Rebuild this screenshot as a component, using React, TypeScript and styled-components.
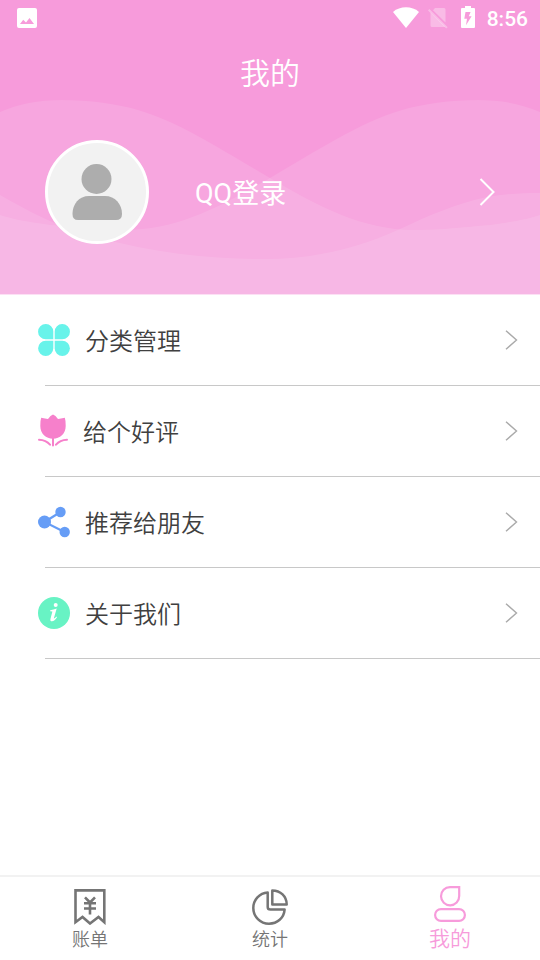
import React from "react";
import styled, { createGlobalStyle } from "styled-components";

const GlobalStyle = createGlobalStyle`
  * { box-sizing: border-box; }
  body {
    margin: 0;
    background: #fff;
    font-family: Roboto, "Noto Sans CJK SC", sans-serif;
  }
`;

const Page = styled.div`
  display: flex;
  flex-direction: column;
  min-height: 100vh;
`;

const Header = styled.header`
  position: relative;
  isolation: isolate;
  padding-bottom: 50px;
  border-bottom: 1px solid #fce0f4;
  background: #f79bdb;
  color: #fff;
`;

const Waves = styled.svg`
  position: absolute;
  inset: 0;
  z-index: -1;
  width: 100%;
  height: 100%;
`;

const StatusBar = styled.div`
  display: flex;
  align-items: center;
  justify-content: space-between;
  height: 36px;
  padding: 0 12px 0 16px;
`;

const StatusGroup = styled.div`
  display: flex;
  align-items: center;
`;

const StatusIcons = styled.span`
  display: flex;
  align-items: center;
  gap: 13px;
  margin: 0 12px 0 9px;
`;

const Clock = styled.time`
  padding-top: 2px;
  font-size: 21px;
  font-weight: 500;
  line-height: 24px;
`;

const Title = styled.h1`
  margin: 0;
  padding-top: 2px;
  font-size: 30px;
  font-weight: 350;
  line-height: 72px;
  text-align: center;
`;

const Login = styled.button`
  display: flex;
  align-items: center;
  width: 100%;
  margin-top: 30px;
  padding: 0 44px 0 45px;
  border: 0;
  background: none;
  color: inherit;
  font: inherit;
  text-align: left;
  cursor: pointer;
`;

const Avatar = styled.span`
  display: grid;
  place-items: center;
  width: 104px;
  height: 104px;
  border: 3px solid #fff;
  border-radius: 50%;
  background: #f2f2f2;
`;

const LoginText = styled.span`
  flex: 1;
  padding: 4px 0 0 46px;
  font-size: 27px;
  line-height: 40px;
`;

const Menu = styled.ul`
  flex: 1;
  margin: 0;
  padding: 0;
  list-style: none;
`;

const MenuItem = styled.li`
  display: flex;
  flex-direction: column;

  &::after {
    content: "";
    height: 1px;
    margin-left: 45px;
    background: #c8c8c8;
  }
`;

const MenuButton = styled.button`
  display: flex;
  align-items: center;
  gap: 15px;
  height: 90px;
  padding: 0 22px 1px 38px;
  border: 0;
  background: none;
  color: #404040;
  font: inherit;
  font-size: 24px;
  font-weight: 350;
  text-align: left;
  cursor: pointer;
`;

const MenuLabel = styled.span`
  flex: 1;
  padding-top: 4px;
  line-height: 36px;
`;

const TabBar = styled.nav`
  display: grid;
  grid-template-columns: repeat(3, 1fr);
  height: 85px;
  border-top: 2px solid #f2f2f2;
`;

const Tab = styled.button<{ $active?: boolean }>`
  display: flex;
  flex-direction: column;
  align-items: center;
  justify-content: flex-start;
  padding: ${(p) => (p.$active ? 9 : 12)}px 0 0;
  border: 0;
  background: none;
  color: ${(p) => (p.$active ? "#f79bdb" : "#757575")};
  font: inherit;
  font-size: ${(p) => (p.$active ? 21 : 18)}px;
  font-weight: 350;
  line-height: ${(p) => (p.$active ? 34 : 30)}px;
  cursor: pointer;
`;

const TopWave =
  "M0 112C18 104 38 100 62 100C90 100 118 104 138 110C180 122 225 152 270 178C318 206 362 230 415 230C442 230 462 227 490 225C512 222 528 219 540 215V294H0Z";

const WaveBackground = () => (
  <Waves viewBox="0 0 540 294" preserveAspectRatio="none" aria-hidden="true">
    <g fill="#fff" fillOpacity="0.11">
      <path d={TopWave} />
      <path d={TopWave} transform="matrix(-1 0 0 1 540 0)" />
      <path d="M0 195C18 205 32 213 50 221C72 231 95 238 120 243C165 254 215 259 265 259C315 259 358 248 400 229C430 215 455 204 487 197C504 194 522 193 540 193V294H0Z" />
    </g>
  </Waves>
);

const PictureIcon = () => (
  <svg width="22" height="20" viewBox="0 0 22 20" aria-hidden="true">
    <path fill="#fff" fillRule="evenodd" d="M3 0H19Q21 0 21 2V18Q21 20 19 20H3Q1 20 1 18V2Q1 0 3 0ZM4 16H18L13.5 10L10 14.5L7.2 11.8Z" />
  </svg>
);

const WifiIcon = () => (
  <svg width="26" height="22" viewBox="0 0 26 22" aria-hidden="true">
    <path fill="#fff" d="M0 5C7-1.2 19-1.2 26 5L13 21Z" />
  </svg>
);

const NoSimIcon = () => (
  <svg width="20" height="22" viewBox="0 0 20 22" aria-hidden="true">
    <g fill="#fff" fillOpacity="0.32">
      <path d="M7 1H16Q17.5 1 17.5 2.5V15.4L5 3.2Z" />
      <path d="M2.5 5.4L17.1 19.6Q17 20 16 20H4Q2.5 20 2.5 18.5Z" />
      <path d="M1.4 2L19.7 20.3L18.2 21.6L0 3.4Z" />
    </g>
  </svg>
);

const BatteryIcon = () => (
  <svg width="14" height="24" viewBox="0 0 14 24" aria-hidden="true">
    <path fill="#fff" d="M4 0H10V2H13Q14 2 14 3V21Q14 22 13 22H1Q0 22 0 21V3Q0 2 1 2H4Z" />
    <path fill="#f79bdb" d="M4.5 6L3.3 12.8H6L5 19.2L10.6 10.3H7.8L9.6 6Z" />
  </svg>
);

const PersonIcon = () => (
  <svg width="50" height="58" viewBox="0 0 50 58" fill="#adadad" aria-hidden="true">
    <circle cx="24.5" cy="16" r="15" />
    <path d="M17 33H33C43 33 50 41 50 51Q50 57 44 57H6Q.5 57 .5 51C.5 41 7 33 17 33Z" />
  </svg>
);

const Chevron = ({ large }: { large?: boolean }) =>
  large ? (
    <svg width="17" height="28" viewBox="0 0 17 28" fill="none" stroke="#fff" strokeWidth="2" aria-hidden="true">
      <path d="M1.5 1L14.5 14L1.5 27" />
    </svg>
  ) : (
    <svg width="13" height="20" viewBox="0 0 13 20" fill="none" stroke="#aaa" strokeWidth="1.4" aria-hidden="true">
      <path d="M1 .7L11.5 10L1 19.3" />
    </svg>
  );

const CloverIcon = () => (
  <svg width="32" height="32" viewBox="0 0 32 32" fill="#68f3ea" aria-hidden="true">
    <path d="M7.7 0A7.5 7.5 0 0 1 15.3 7.6V15.3H7.7A7.65 7.65 0 0 1 7.7 0Z" />
    <path d="M24.3 0A7.65 7.65 0 0 1 24.3 15.3H16.7V7.6A7.5 7.5 0 0 1 24.3 0Z" />
    <path d="M7.7 16.7H15.3V24.3A7.6 7.6 0 1 1 7.7 16.7Z" />
    <path d="M16.7 16.7H24.3A7.6 7.6 0 1 1 16.7 24.3Z" />
  </svg>
);

const TulipIcon = () => (
  <svg width="30" height="33" viewBox="0 0 30 33" aria-hidden="true">
    <path fill="#f680cb" d="M3.2 3.8Q7.5 4.6 10 5Q12.5 1 15 .5Q17.5 1 20 5Q22.5 4.6 26.8 3.8Q27.9 7 27.7 12C27.7 20 22 24.7 15 24.7S2.3 20 2.3 12Q2.1 7 3.2 3.8Z" />
    <path fill="none" stroke="#f680cb" strokeWidth="2" strokeLinecap="round" d="M15 23V31.5M1 25.8Q8 26 12 30.7M29 25.8Q22 26 18 30.7" />
  </svg>
);

const ShareIcon = () => (
  <svg width="32" height="32" viewBox="0 0 32 32" fill="#669df6" aria-hidden="true">
    <path fill="none" stroke="#669df6" strokeWidth="2.2" d="M22.5 6L6.5 16L26.5 26" />
    <circle cx="6.5" cy="16" r="6.5" />
    <circle cx="22.5" cy="6" r="5.2" />
    <circle cx="26.7" cy="26" r="5.2" />
  </svg>
);

const InfoIcon = () => (
  <svg width="32" height="32" viewBox="0 0 32 32" aria-hidden="true">
    <circle cx="16" cy="16" r="16" fill="#68f3c4" />
    <circle cx="17.7" cy="8" r="2" fill="#fff" />
    <path fill="#fff" d="M12.2 13.2Q15.5 12.8 18.7 11.5L15.8 21.5Q16.8 21.4 18.5 19.6L19 20.3Q16.5 24.3 14 24.3Q11.8 24.3 12.5 21.7L14.4 14.6L12.2 14.3Z" />
  </svg>
);

const BillIcon = () => (
  <svg width="32" height="36" viewBox="0 0 32 36" fill="none" stroke="currentColor" aria-hidden="true">
    <path strokeWidth="2.6" d="M1.5 1.4H30.3V33.2L24.5 28L16 34.5L8.5 28L1.5 33.2Z" />
    <path strokeWidth="2.6" d="M11 8.3L16 13.5L21 8.3M16 13V25.5M10 14.3H22M10 19.5H22" />
  </svg>
);

const PieIcon = () => (
  <svg width="36" height="36" viewBox="0 0 36 36" fill="none" stroke="currentColor" strokeWidth="2.5" strokeLinejoin="round" aria-hidden="true">
    <path d="M15.7 3.4C7.5 4 1.3 10.7 1.3 19A15.7 15.7 0 0 0 17 34.7C25.3 34.7 32 29 32.6 20.6H18.5Q15.7 20.6 15.7 18Z" />
    <path d="M20.3 1.4V15.5H34.7C34.7 7.5 28.5 1.4 20.3 1.4Z" />
  </svg>
);

const ProfileIcon = () => (
  <svg width="32" height="36" viewBox="0 0 32 36" fill="none" stroke="currentColor" strokeWidth="2.2" aria-hidden="true">
    <path d="M16 1.1H25.2V10A9.1 9.1 0 1 1 16 1.1Z" />
    <rect x="1.1" y="23.1" width="29.8" height="11.8" rx="5.9" />
  </svg>
);

const menu = [
  { label: "分类管理", Icon: CloverIcon },
  { label: "给个好评", Icon: TulipIcon },
  { label: "推荐给朋友", Icon: ShareIcon },
  { label: "关于我们", Icon: InfoIcon },
];

const tabs = [
  { label: "账单", Icon: BillIcon, active: false },
  { label: "统计", Icon: PieIcon, active: false },
  { label: "我的", Icon: ProfileIcon, active: true },
];

export default function App() {
  return (
    <Page>
      <GlobalStyle />
      <Header>
        <WaveBackground />
        <StatusBar>
          <PictureIcon />
          <StatusGroup>
            <WifiIcon />
            <StatusIcons>
              <NoSimIcon />
              <BatteryIcon />
            </StatusIcons>
            <Clock>8:56</Clock>
          </StatusGroup>
        </StatusBar>
        <Title>我的</Title>
        <Login type="button">
          <Avatar>
            <PersonIcon />
          </Avatar>
          <LoginText>QQ登录</LoginText>
          <Chevron large />
        </Login>
      </Header>
      <Menu>
        {menu.map(({ label, Icon }) => (
          <MenuItem key={label}>
            <MenuButton type="button">
              <Icon />
              <MenuLabel>{label}</MenuLabel>
              <Chevron />
            </MenuButton>
          </MenuItem>
        ))}
      </Menu>
      <TabBar>
        {tabs.map(({ label, Icon, active }) => (
          <Tab key={label} type="button" $active={active} aria-current={active ? "page" : undefined}>
            <Icon />
            <span>{label}</span>
          </Tab>
        ))}
      </TabBar>
    </Page>
  );
}
